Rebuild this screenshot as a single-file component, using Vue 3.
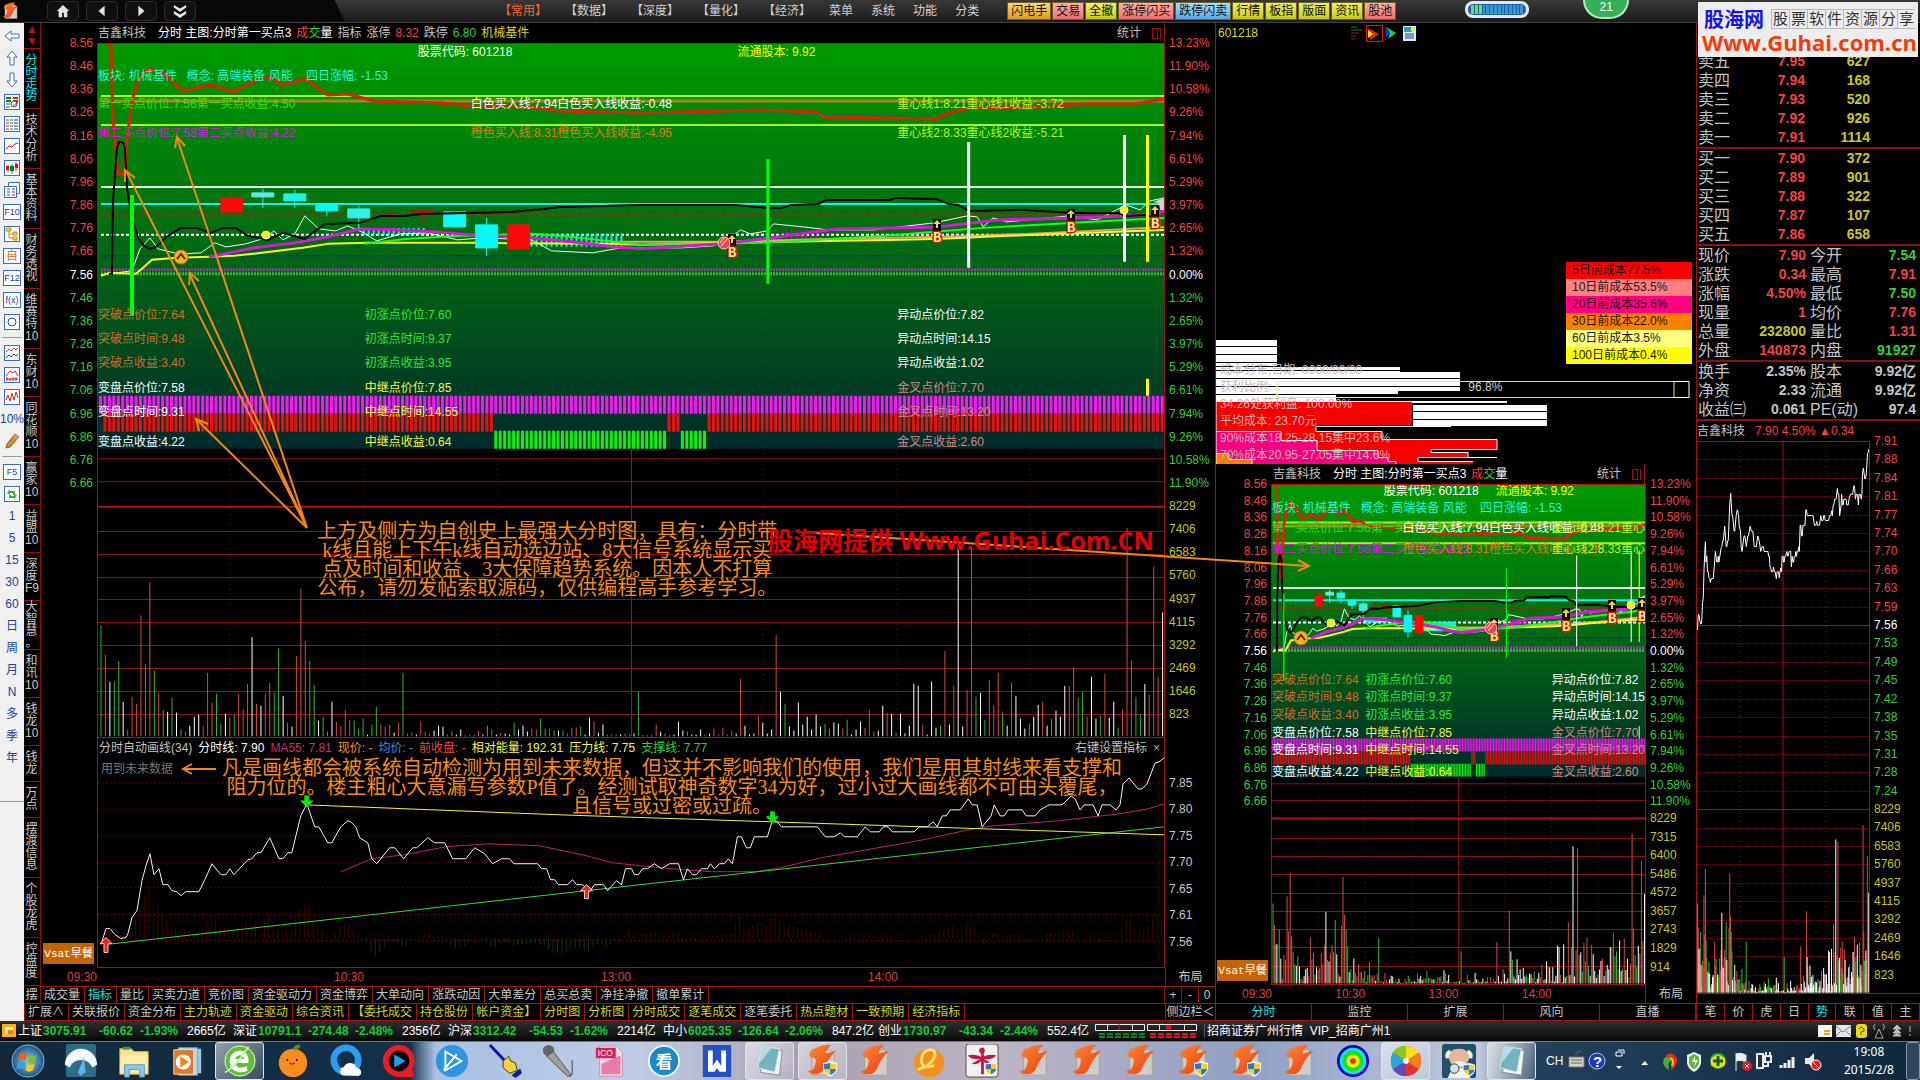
<template>
  <div class="desk">
    <!-- Símbolos compartidos -->
    <svg class="defs" aria-hidden="true">
      <defs>
        <linearGradient id="field" x1="0" y1="0" x2="0" y2="1">
          <stop offset="0" stop-color="#009a00" /><stop offset="0.5" stop-color="#006a12" /><stop offset="1" stop-color="#002a2c" />
        </linearGradient>
        <linearGradient id="flame" x1="0" y1="0" x2="1" y2="1"><stop offset="0" stop-color="#ff8a3a" /><stop offset="1" stop-color="#e8390a" /></linearGradient>
        <radialGradient id="orb"><stop offset="0" stop-color="#8fd0f0" /><stop offset="1" stop-color="#1c5486" /></radialGradient>

        <symbol id="session" viewBox="0 0 1067 693" preserveAspectRatio="none">
          <path d="M0 415H1067M0 438H1067" stroke="#8e1414" class="hair" />
          <path d="M0 463H1067" stroke="#b01414" stroke-width="2" class="hair" />
          <path d="M132 405V693M266 405V693M400 405V693M666 405V693M800 405V693M933 405V693" stroke="#7c1010" stroke-dasharray="1 4" class="hair" />
          <path d="M534 405V693" stroke="#a01414" class="hair" />
          <rect width="1067" height="405" fill="url(#field)" />
          <path d="M3 52H1067M3 81H1067" stroke="#a6f81c" stroke-width="2" class="hair" />
          <path d="M3 57H1067" stroke="#a68418" stroke-width="3" class="hair" />
          <path d="M3 143H1067" stroke="#f0fff0" stroke-width="2" class="hair" />
          <path d="M3 160H1067" stroke="#19f0e8" stroke-width="2" class="hair" />
          <path d="M3 171H1067" stroke="#8c3010" stroke-width="2" stroke-dasharray="4 2" class="hair" />
          <path d="M3 191H1067" stroke="#fff" stroke-width="2" stroke-dasharray="3 2" class="hair" />
          <path d="M3 212H1067" stroke="#10208c" stroke-dasharray="4 1" class="hair" />
          <path d="M3 226H1067" stroke="#8c409c" stroke-width="3" stroke-dasharray="2 1" class="hair" />
          <path d="M3 230H1067" stroke="#30b830" stroke-width="3" stroke-dasharray="2 1" class="hair" />
          <path :d="hatch(266, 328, 184, 191)" stroke="#20e8e8" stroke-width="2" class="hair" />
          <path :d="hatch(434, 528, 190, 203)" stroke="#20e8e8" stroke-width="2" class="hair" />
          <path :d="hatch(684, 734, 186, 199)" stroke="#c010c0" class="hair" />
          <path :d="bars(0, 240)" transform="translate(0 352)" fill="#f01cf0" />
          <path :d="bars(1, 89) + bars(128, 131) + bars(137, 240)" transform="translate(0 370)" fill="#e81010" />
          <path :d="bars(89, 128) + bars(131, 137)" transform="translate(0 387)" fill="#10f010" />
          <g fill="none" stroke-linejoin="round">
            <polyline :points="lines.white" stroke="#e8ffe8" class="hair" />
            <polyline :points="lines.salmon" stroke="#e8a070" stroke-width="2" class="hair" />
            <polyline :points="lines.yellow" stroke="#f8f820" stroke-width="2" class="hair" />
            <polyline :points="lines.green" stroke="#20f820" stroke-width="2" class="hair" />
            <polyline :points="lines.magenta" stroke="#d818d8" stroke-width="3" class="hair" />
            <polyline :points="lines.red" stroke="#d82408" stroke-width="3" class="hair" />
          </g>
          <g v-for="c in candles" :key="c[0]" :stroke="c[3]" :fill="c[3]">
            <path :d="`M${c[0] + 11} ${c[4]}V${c[5]}`" class="hair" />
            <rect :x="c[0]" :y="c[1]" width="22" :height="c[2]" class="hair" />
          </g>
          <path d="M293 165v10M288 170h10M314 169h22" stroke="#b01010" class="hair" />
          <polyline :points="lines.black" fill="none" stroke="#000" stroke-width="2" class="hair" />
          <path d="M32 151h4v121h-4zM669 115h3v125h-3z" fill="#00ff10" />
          <path d="M870 98h3v126h-3zM1026 91h3v127h-3z" fill="#fff" />
          <path d="M1049 91h3v127h-3zM1049 335h3v17h-3z" fill="#ff0" />
          <path d="M1056 158l11-4v12h-4v-6l-2 8v-9z" fill="#ccd4cc" />
        </symbol>

        <symbol id="volumes" viewBox="0 0 1067 230" preserveAspectRatio="none">
          <path v-for="v in volumePaths" :key="v.color" :d="v.d" :stroke="v.color" class="hair" />
        </symbol>

        <symbol id="arrow" viewBox="0 0 16 16"><path d="M1 8l6-5v3h8v4H7v3z" fill="#fff" stroke="#3b6cc4" /></symbol>
        <symbol id="doc" viewBox="0 0 16 16"><rect x=".5" y=".5" width="15" height="15" fill="#fff" stroke="#3b6cc4" /><path d="M2 4h3M2 7h3M2 10h3M2 13h3" stroke="#d02020" /><path d="M6 4h3M6 7h3M6 10h3M6 13h3" stroke="#108030" /><path d="M10 4h4M10 7h4M10 10h4M10 13h4" stroke="#2030a0" /></symbol>
        <symbol id="lens" viewBox="0 0 16 16"><rect x=".5" y=".5" width="15" height="15" fill="#fff" stroke="#3b6cc4" /><path d="M2 4h5M2 7h5" stroke="#108030" stroke-width="2" /><path d="M9 4h5M9 7h5" stroke="#d02020" stroke-width="2" /><path d="M2 10h4M2 13h4" stroke="#108030" /><circle cx="10" cy="10" r="3" fill="#e8eef8" stroke="#555" /><path d="M8 13l6-5" stroke="#555" /></symbol>
        <symbol id="trend" viewBox="0 0 16 16"><rect x=".5" y=".5" width="15" height="15" fill="#fff" stroke="#3b6cc4" /><path d="M2 11l3-3 3 1 3-3 3-1" fill="none" stroke="#d01818" /></symbol>
        <symbol id="candle" viewBox="0 0 16 16"><rect x=".5" y=".5" width="15" height="15" fill="#fff" stroke="#3b6cc4" /><path d="M4 5v7M12 2v9" stroke="#e01010" /><path d="M8 4v10" stroke="#008030" /><path d="M2 6h3v4H2zM11 4h3v4h-3z" fill="#e01010" /><path d="M6 6h4v5H6z" fill="#008030" /></symbol>
        <symbol id="sheets" viewBox="0 0 16 16"><path d="M4.500.500h11v11h-11z" fill="#fff" stroke="#3b6cc4" /><path d="M.5 4.500h12v11H.5z" fill="#fff" stroke="#3b6cc4" /><path d="M3 7h3m2 0h3M3 10h3m2 0h3M3 13h3m2 0h3" stroke="#444" /></symbol>
        <symbol id="tree" viewBox="0 0 16 16"><rect x=".5" y=".5" width="15" height="15" fill="#fff" stroke="#3b6cc4" /><path d="M5 5v7h4M5 8h4" fill="none" stroke="#c09020" /><path d="M2 2h5v3H2zM9 6h4v3H9zM9 11h4v3H9z" fill="#f8d050" stroke="#c09020" /></symbol>
        <symbol id="ring" viewBox="0 0 16 16"><rect x=".5" y=".5" width="15" height="15" fill="#fff" stroke="#3b6cc4" /><circle cx="8" cy="8" r="4" fill="none" stroke="#2050a0" /></symbol>
        <symbol id="waves" viewBox="0 0 16 16"><rect x=".5" y=".5" width="15" height="15" fill="#fff" stroke="#3b6cc4" /><path d="M2 7l3-3 2 2 3-3 2 2 2-2" fill="none" stroke="#d02040" /><path d="M2 13l3-3 2 2 3-3 2 2 2-2" fill="none" stroke="#2040c0" /></symbol>
        <symbol id="roof" viewBox="0 0 16 16"><rect x=".5" y=".5" width="15" height="15" fill="#fff" stroke="#3b6cc4" /><path d="M2 9l4-5 3 2 2-2 3 5M2 12h12M3 10v4M6 11v3M9 10v4M12 10v4" fill="none" stroke="#d02020" /></symbol>
        <symbol id="pulse" viewBox="0 0 16 16"><rect x=".5" y=".5" width="15" height="15" fill="#fff" stroke="#3b6cc4" /><path d="M2 11l2-5 2 6 2-8 2 7 2-8 2 6" fill="none" stroke="#d02020" /></symbol>
        <symbol id="pencil" viewBox="0 0 16 16"><path d="M2 15l1-4 8-10 4 3-9 10z" fill="#d88a38" stroke="#8a5a20" /><path d="M11 1l4 3-2 3-4-3z" fill="#b0a8a0" /></symbol>
        <symbol id="cycle" viewBox="0 0 16 16"><rect x=".5" y=".5" width="15" height="15" fill="#fff" stroke="#3b6cc4" /><path d="M3 7l3-4v2h5v4H9V7H6v2zM13 9l-3 5v-2H5V9h2v1h3V8z" fill="#40b040" /></symbol>

        <symbol id="shield" viewBox="0 0 16 16"><path d="M8 0l7 2v6q-1 5-7 8-6-3-7-8V2z" fill="#f4f4f4" /><path d="M8 2v6H2V3zM8 8h6q-1 4-6 6z" fill="#2a76c8" /><path d="M8 2l6 1v5H8zM2 8h6v6q-5-2-6-6z" fill="#f8d020" /></symbol>
        <symbol id="tdx" viewBox="0 0 32 36"><path d="M4 6h20l4 5v22H4z" fill="#d0ccc8" stroke="#a8a098" /><path d="M3 8Q12 0 25 1q-7 6-6 9 5-1 11-3-9 9-13 19Q14 33 6 32q-6-2-6-3 7-1 8-9 2-6-5-6-3-2 0-6z" fill="url(#flame)" /></symbol>
        <symbol id="tdxs" viewBox="0 0 32 36"><use href="#tdx" width="32" height="36" /><use href="#shield" x="15" y="18" width="17" height="17" /></symbol>
        <symbol id="start" viewBox="0 0 40 40"><circle cx="20" cy="20" r="19" fill="url(#orb)" stroke="#9cc8e0" /><path d="M10 12q5-3 9 0l-2 8q-4-3-9 0z" fill="#f06020" /><path d="M21 13q4 3 9 0l-2 8q-5 3-9 0z" fill="#80c030" /><path d="M8 22q5-3 9 0l-2 8q-4-3-9 0z" fill="#30a0e8" /><path d="M19 23q4 3 9 0l-2 8q-5 3-9 0z" fill="#f8c820" /></symbol>
        <symbol id="gauge" viewBox="0 0 36 36"><rect x="2" width="32" height="35" rx="3" fill="#2e6d84" /><path d="M1 22a17 17 0 0 1 34 0l-5 3a13 13 0 0 0-24 0z" fill="#f4f8fa" /><path d="M21 14l2 16-6 4-2-4z" fill="#5ab4e8" /></symbol>
        <symbol id="folder" viewBox="0 0 36 36"><path d="M3 5h12l3 3h15v24H3z" fill="#f8e490" stroke="#d0b050" /><path d="M6 3h8v3H6z" fill="#40a040" /><path d="M4 12h29l-1 19H3z" fill="#fbeca8" /><path d="M8 35V22h21v13h-5v-8H13v8z" fill="#8cc8ea" stroke="#5a98c0" /></symbol>
        <symbol id="player" viewBox="0 0 36 36"><path d="M14 5h19v26H14z" fill="#9cc8e0" /><path d="M9 4h20v29H9z" fill="#b8daea" stroke="#7aa8c0" /><path d="M4 6h21v26H4z" fill="#e07828" stroke="#f0d8c0" /><circle cx="14" cy="19" r="8" fill="#fff" /><path d="M11 13l9 6-9 6z" fill="#f08018" /></symbol>
        <symbol id="ebrowser" viewBox="0 0 36 36"><circle cx="18" cy="18" r="16" fill="#5cc030" stroke="#e8ffe0" /><path d="M27 20H13q1 5 6 5 4 0 6-2l1 5q-3 2-8 2-11-1-11-12Q8 8 18 7q10 1 9 13zM13 16h9q0-4-4-4-4 0-5 4z" fill="#fff" /><path d="M2 30Q12 26 27 3" fill="none" stroke="#c8f0a8" stroke-width="2" /></symbol>
        <symbol id="orange" viewBox="0 0 36 36"><circle cx="18" cy="20" r="15" fill="#f88c1c" /><path d="M18 6q1-6 8-5-1 6-8 5z" fill="#3a9828" /><circle cx="12" cy="17" r="1" /><circle cx="22" cy="17" r="1" /><path d="M14 20q3 3 6 0" fill="none" stroke="#502000" /></symbol>
        <symbol id="qbrowser" viewBox="0 0 36 36"><circle cx="18" cy="17" r="13" fill="none" stroke="#2c9cf0" stroke-width="7" /><path d="M14 33a5 5 0 0 1 2-9 7 7 0 0 1 13 1q5 1 5 5 0 4-4 4z" fill="#fff" /></symbol>
        <symbol id="qplayer" viewBox="0 0 36 36"><path d="M18 1a17 17 0 0 1 14 26l2 8H18A17 17 0 0 1 18 1z" fill="#ec1c24" /><circle cx="18" cy="18" r="11" /><path d="M13 11l12 7-12 7z" fill="#1ca0f0" /></symbol>
        <symbol id="bluep" viewBox="0 0 36 36"><circle cx="18" cy="18" r="17" fill="#2e96e0" /><path d="M11 8l17 10-17 10zM9 28l14-17" fill="none" stroke="#fff" stroke-width="2" /></symbol>
        <symbol id="hand" viewBox="0 0 36 36"><path d="M2 1l17 18" stroke="#1010a0" stroke-width="3" /><path d="M16 18l6-5 2 5 5 2 2 8-8 3-7-6z" fill="#f8d040" stroke="#503000" /><path d="M25 33l9-7 2 5-7 5z" fill="#102090" /></symbol>
        <symbol id="mic" viewBox="0 0 36 36"><circle cx="8" cy="7" r="6" fill="#606468" /><path d="M6 13l7-5 19 25-4 1z" fill="#a4a098" stroke="#505050" /><path d="M33 17v15l-3 3" fill="none" stroke="#404040" /></symbol>
        <symbol id="icofile" viewBox="0 0 36 36"><path d="M6 2h18l6 7v25H6z" fill="#f8dce8" stroke="#c890a8" /><path d="M8 21l20-9v20H8z" fill="#e87ca8" /><rect x="2" y="4" width="21" height="11" fill="#d82050" /><text x="4" y="13" font-size="9" fill="#fff">ICO</text></symbol>
        <symbol id="kan" viewBox="0 0 36 36"><circle cx="18" cy="18" r="16" fill="#1c88c8" stroke="#e8f8ff" stroke-width="2" /><text x="9" y="25" font-size="18" font-weight="bold" fill="#fff">看</text></symbol>
        <symbol id="wps" viewBox="0 0 36 36"><path d="M3 1h30v34H3z" fill="#2450c8" /><path d="M11 7v20h3l4-6 4 6h3V7" fill="none" stroke="#fff" stroke-width="5" /></symbol>
        <symbol id="note" viewBox="0 0 36 36"><path d="M12 4l19 3-3 26-20-3z" fill="#f0f4f4" stroke="#888" /><path d="M10 3l18 2-5 25-18-5z" fill="#74b4c0" stroke="#d8f0f0" /><path d="M10 3l10 1-13 16z" fill="#b4dce0" /></symbol>
        <symbol id="ecat" viewBox="0 0 36 36"><ellipse cx="18" cy="20" rx="16" ry="15" fill="#f49020" /><path d="M6 27q13-3 18-13 2-8-5-8-8 1-9 10-1 11 13 7" fill="none" stroke="#ffe070" stroke-width="3" /></symbol>
        <symbol id="dragonfly" viewBox="0 0 36 36"><rect x="1" width="34" height="35" rx="3" fill="#f4f0f0" stroke="#444" /><path d="M17 4h3v28h-3z" fill="#c01848" /><circle cx="18" cy="7" r="3" fill="#c01848" /><path d="M3 12q9-2 15 2 6-4 15-2-3 5-13 4l9 5q-6 2-11-4-5 6-11 4l9-5Q6 17 3 12z" fill="#c01848" /><use href="#shield" x="20" y="19" width="15" height="15" /></symbol>
        <symbol id="target" viewBox="0 0 36 36"><circle cx="18" cy="18" r="17" fill="#0808c8" /><circle cx="18" cy="18" r="14" fill="#10e8f0" /><circle cx="18" cy="18" r="11" fill="#18e018" /><circle cx="18" cy="18" r="7" fill="#f8f010" /><circle cx="18" cy="18" r="3" fill="#f02010" /></symbol>
        <symbol id="pinwheel" viewBox="0 0 36 36"><circle cx="18" cy="18" r="16" fill="#e83030" /><path d="M18 18L4 9q6-8 14-7z" fill="#88c820" /><path d="M18 18V2q9 0 14 7z" fill="#f8e020" /><path d="M18 18l14-9q4 9 0 18z" fill="#f08020" /><path d="M18 18L4 27q-4-9 0-18z" fill="#28a8d8" /><path d="M18 18v16q-9 0-14-7z" fill="#6048c0" /><circle cx="18" cy="18" r="3" fill="#fff" /></symbol>
        <symbol id="prof" viewBox="0 0 36 36"><rect width="36" height="36" rx="3" fill="#22506c" /><path d="M7 15q0-10 11-10t11 10l-4 9H11z" fill="#e0b898" /><path d="M6 15q-2-5 3-7M30 15q2-5-3-7" stroke="#eee" stroke-width="4" fill="none" /><path d="M11 20q7-4 14 0l-3 4h-8zM6 36l5-11h14l5 11z" fill="#f0f0f0" /><circle cx="13" cy="26" r="5" fill="#cfe4ee" stroke="#333" /><use href="#shield" x="21" y="20" width="15" height="15" /></symbol>
      </defs>
    </svg>

    <header class="topbar">
      <div class="topnav">
        <svg class="applogo" viewBox="0 0 32 36"><use href="#tdx" /></svg>
        <button v-for="n in navIcons" :key="n.label" :aria-label="n.label">
          <svg viewBox="0 0 16 16"><path :d="n.d" fill="#e4e4e4" /></svg>
        </button>
      </div>
      <nav class="menu">
        <a v-for="m in menu" :key="m" href="#" :class="{ hot: m === '【常用】' }">{{ m }}</a>
      </nav>
      <div class="quick">
        <button v-for="q in quick" :key="q[0]" :class="q[1]">{{ q[0] }}</button>
      </div>
      <div class="meter"><i v-for="n in 14" :key="n" :class="{ on: n < 4 }"></i></div>
      <div class="bubble">21</div>
    </header>

    <main class="workspace">
      <aside class="tools">
        <template v-for="(t, i) in tools" :key="i">
          <hr v-if="t === '-'" />
          <button v-else-if="t[0] === '#'" :class="{ up: i === 1, down: i === 2 }" :aria-label="t.slice(1)"><svg viewBox="0 0 16 16"><use :href="t" /></svg></button>
          <button v-else :class="{ boxed: boxed.includes(t), self: t === '自' }">{{ t }}</button>
        </template>
        <div class="rest"></div>
      </aside>

      <nav class="sidetabs">
        <div class="scroller"><button aria-label="上">▲</button><button aria-label="下">▼</button></div>
        <a v-for="(s, i) in sideTabs" :key="i" href="#" :class="{ active: i === 0, tight: s === '大智慧。' }">{{ s }}</a>
      </nav>

      <section class="main">
        <div class="chart-head">
          <span class="dim">吉鑫科技</span><span class="gap">分时 主图:分时第一买点3</span>
          <span><b class="r">成</b><b class="g">交</b>量</span>
          <span class="dim">指标</span><span class="dim">涨停</span><span class="r">8.32</span>
          <span class="dim">跌停</span><span class="g">6.80</span><span class="y">机械基件</span>
          <span class="dim stat">统计</span><i class="split"></i>
        </div>
        <div class="upper">
          <div class="axis left">
            <div class="prices"><span v-for="(p, i) in prices" :key="p" :class="tone(i)"><em>{{ p }}</em></span></div>
            <div class="vols"></div>
          </div>
          <div class="plot">
            <svg class="fill"><use href="#session" width="100%" height="100%" /></svg>
            <div class="volume-pane">
              <i v-for="n in 10" :key="n" class="row"></i>
              <svg class="fill"><use href="#volumes" width="100%" height="100%" /></svg>
            </div>
            <span v-for="l in labels" :key="l[0]" class="label" :style="pos(l)">{{ l[0] }}</span>
            <svg v-for="(m, i) in markers" :key="i" class="marker" viewBox="0 0 20 30" :style="{ left: m[1] / 10.67 + '%', top: m[2] / 6.93 + '%' }">
              <template v-if="m[0] === 'B'"><rect x="6" y="3" width="8" height="12" fill="#000" /><path d="M10 4l4 4h-3v4H9V8H6z" fill="#f8d818" /><text x="6" y="26" class="buy">B</text></template>
              <template v-else-if="m[0] === 'gold'"><circle cx="10" cy="15" r="7" fill="#f8b020" stroke="#b87008" /><path d="M6 17l4-5 4 5" fill="none" stroke="#602000" stroke-width="2" /></template>
              <template v-else-if="m[0] === 'ball'"><circle cx="10" cy="15" r="6" fill="#e84848" stroke="#ffc8c8" /><path d="M7 18l6-7M6 15l4-5" stroke="#ffe0e0" /></template>
              <circle v-else cx="10" cy="15" r="4" fill="#f8f010" stroke="#fff890" />
            </svg>
          </div>
          <div class="axis right">
            <div class="prices"><span v-for="(p, i) in percents" :key="i" :class="tone(i)"><em>{{ p }}</em></span></div>
            <div class="vols"><span v-for="v in volBig" :key="v"><em>{{ v }}</em></span></div>
          </div>
        </div>
        <div class="indicator-head">
          <span class="dim">分时自动画线(34)</span><span>分时线: 7.90</span><span class="pink">MA55: 7.81</span>
          <span class="o">现价: -</span><span class="b">均价: -</span><span class="r">前收盘: -</span>
          <span class="y">相对能量: 192.31</span><span class="y">压力线: 7.75</span><span class="g">支撑线: 7.77</span>
          <span class="dim stat">右键设置指标</span><button aria-label="关闭">×</button>
        </div>
        <div class="lower">
          <div class="axis left"><button class="vsat">Vsat早餐</button></div>
          <div class="plot">
            <svg class="fill" viewBox="0 0 1067 210" preserveAspectRatio="none" fill="none">
              <path d="M0 25H1067M0 52H1067M0 78H1067M0 105H1067M0 130H1067M0 157H1067M0 183H1067" stroke="#7c1818" stroke-dasharray="1 3" class="hair" />
              <path :d="osc.up" stroke="#3c0404" class="hair" />
              <path :d="osc.down" stroke="#04380c" class="hair" />
              <polyline :points="lines.ma" stroke="#b82468" class="hair" />
              <path d="M8 187L489 133L1067 69" stroke="#38d838" class="hair" />
              <path d="M209 47L463 57L675 64L1067 77" stroke="#f0f040" class="hair" />
              <polyline :points="lines.price" stroke="#f4f4f4" class="hair" />
              <path d="M8 180l6 6h-4v9H6v-9H2zM489 127l6 6h-4v8h-4v-8h-4z" fill="#f02020" stroke="#ffc8c8" class="hair" />
              <path d="M209 49l-6-6h4v-5h4v5h4zM675 65l-6-6h4v-5h4v5h4z" fill="#10e010" stroke="#10e010" class="hair" />
            </svg>
            <span class="future">用到未来数据</span>
          </div>
          <div class="axis right scale"><span v-for="p in lowScale" :key="p"><em>{{ p }}</em></span></div>
        </div>
        <div class="times">
          <div class="ticks"><span v-for="t in times" :key="t">{{ t }}</span></div><button>布局</button>
        </div>
        <nav class="tabs">
          <a v-for="t in indicatorTabs" :key="t" href="#" :class="{ active: t === '指标' }">{{ t }}</a>
          <div class="zoomers"><button>+</button><button>-</button><button>0</button></div>
        </nav>
      </section>

      <nav class="tabs ext">
        <a v-for="t in extTabs" :key="t" href="#" :class="{ y: yellowTabs.includes(t) }">{{ t }}</a>
        <button class="fold">侧边栏＜</button>
      </nav>

      <section class="middle">
        <div class="cost">
          <div class="cost-head">
            <span class="y">601218</span>
            <svg viewBox="0 0 66 17">
              <path d="M0 2h6M0 5h11" stroke="#108030" /><path d="M0 8h8M0 11h5M0 14h4" stroke="#b01818" />
              <path d="M15.500.500h16v16h-16z" stroke="#e01818" fill="none" /><path d="M17 3l11 6-9 6z" fill="#e82020" /><path d="M17 5l5 4-5 4z" fill="#f8e020" />
              <path d="M35 2l10 6-8 6 2-6z" fill="#10d840" /><path d="M34 2l5 6-4 5z" fill="#2030e0" />
              <path d="M52 1h13v15H52z" fill="#d8e8f8" /><path d="M53 2h8v5h-8z" fill="#30a0b0" /><path d="M60 2h4v4h-4z" fill="#f0e040" /><path d="M54 9h9M54 11h9M54 13h9" stroke="#204890" />
            </svg>
          </div>
          <ul class="legend">
            <li v-for="l in legend" :key="l[0]" :style="{ background: l[1] }">{{ l[0] }}</li>
          </ul>
          <div class="spread">
            <svg class="fill" viewBox="0 0 480 124" preserveAspectRatio="none">
              <path d="M0 0h61v26H0zM0 27h184v5H0zM0 32h244v19H0zM0 51h182v3H0zM0 54h120v8H0zM95 61h196v2H95zM197 65h134v21H197z" fill="#fcfcfc" />
              <path d="M0 6.500h61M0 14.500h61M0 22.500h61M0 30.500h184M0 38.500h244M0 46.500h244M0 54.500h120M197 71.500h134M197 79.500h134" stroke="#000" class="hair" />
              <path d="M0 62h196v23h-96v6h66v8h115v10h-66v3h37v5h-50v4h55v3H0z" fill="#f80000" />
              <path d="M0 91h65v9h36v10h61v7h10v4h8v3H0z" fill="#f80080" />
              <path d="M0 113h13v6h23v5H0z" fill="#f88000" />
              <path d="M235 86.500H100v5h66v8h115v10h-66v3h37v5h-50v4h55M0 91.500h65v9h36v10h61v7h10v4h8v3M0 113.500h13v6h23v5M0 62v62M202 117.500h79" fill="none" stroke="#fff" class="hair" />
              <path d="M61 41.500h412v16H61z" fill="none" stroke="#fff" class="hair" /><path d="M61 41.500h397v16H61z" fill="none" stroke="#f0f030" class="hair" />
            </svg>
            <p>成本分布,日期: 0000/00/00</p>
            <p class="ratio">获利比例:<span>96.8%</span></p>
            <p>34.26处获利盘: 100.00%</p>
            <p>平均成本: 23.70元</p>
            <p>90%成本18.25-28.15集中23.6%</p>
            <p>70%成本20.95-27.05集中14.6%</p>
          </div>
        </div>
        <div class="side-chart">
          <div class="chart-head">
            <span class="dim">吉鑫科技</span><span class="gap">分时 主图:分时第一买点3</span>
            <span><b class="r">成</b><b class="g">交</b>量</span><span class="dim stat">统计</span><i class="split"></i>
          </div>
          <div class="upper">
            <div class="axis left">
              <div class="prices"><span v-for="(p, i) in prices" :key="p" :class="tone(i)"><em>{{ p }}</em></span></div>
              <div class="vols"></div>
              <button class="vsat">Vsat早餐</button>
            </div>
            <div class="plot">
              <svg class="fill"><use href="#session" width="100%" height="100%" /></svg>
              <div class="volume-pane">
                <i v-for="n in 9" :key="n" class="row"></i>
                <svg class="fill"><use href="#volumes" width="100%" height="100%" /></svg>
              </div>
              <span v-for="l in labels" :key="l[0]" class="label" :style="pos(l)">{{ l[0] }}</span>
              <svg v-for="(m, i) in markers" :key="i" class="marker" viewBox="0 0 20 30" :style="{ left: m[1] / 10.67 + '%', top: m[2] / 6.93 + '%' }">
                <template v-if="m[0] === 'B'"><rect x="6" y="3" width="8" height="12" fill="#000" /><path d="M10 4l4 4h-3v4H9V8H6z" fill="#f8d818" /><text x="6" y="26" class="buy">B</text></template>
                <template v-else-if="m[0] === 'gold'"><circle cx="10" cy="15" r="7" fill="#f8b020" stroke="#b87008" /><path d="M6 17l4-5 4 5" fill="none" stroke="#602000" stroke-width="2" /></template>
                <template v-else-if="m[0] === 'ball'"><circle cx="10" cy="15" r="6" fill="#e84848" stroke="#ffc8c8" /><path d="M7 18l6-7M6 15l4-5" stroke="#ffe0e0" /></template>
                <circle v-else cx="10" cy="15" r="4" fill="#f8f010" stroke="#fff890" />
              </svg>
            </div>
            <div class="axis right">
              <div class="prices"><span v-for="(p, i) in percents" :key="i" :class="tone(i)"><em>{{ p }}</em></span></div>
              <div class="vols"><span v-for="v in volSide" :key="v"><em>{{ v }}</em></span></div>
            </div>
          </div>
          <div class="times">
            <div class="ticks"><span v-for="t in times" :key="t">{{ t }}</span></div><button>布局</button>
          </div>
        </div>
      </section>

      <nav class="even mid-tabs">
        <a v-for="t in midTabs" :key="t" href="#" :class="{ active: t === '分时' }">{{ t }}</a>
      </nav>

      <section class="quotes">
        <div class="quote-top"></div>
        <table class="book">
          <tbody v-for="side in book" :key="side[0][0]">
            <tr v-for="r in side" :key="r[0]"><th>{{ r[0] }}</th><td class="r">{{ r[1] }}</td><td class="qty">{{ r[2] }}</td></tr>
          </tbody>
        </table>
        <table class="facts">
          <tbody v-for="(group, gi) in facts" :key="gi">
            <tr v-for="r in group" :key="r[0]">
              <th>{{ r[0] }}</th><td :class="r[2]">{{ r[1] }}</td><th>{{ r[3] }}</th><td :class="r[5]">{{ r[4] }}</td>
            </tr>
          </tbody>
        </table>
        <div class="mini-head"><span class="dim">吉鑫科技</span><span class="r">7.90 4.50% ▲0.34</span></div>
        <div class="mini">
          <div class="mini-plot">
            <i v-for="n in 30" :key="n" class="row" :class="{ solid: n === 11 || n === 21 || n === 1 }"></i>
            <svg class="fill" viewBox="0 0 4 1" preserveAspectRatio="none">
              <path d="M1 0V1M3 0V1" stroke="#8c1414" stroke-dasharray="1 4" class="hair" /><path d="M2 0V1" stroke="#a01414" class="hair" />
            </svg>
            <svg class="line" viewBox="0 -8 1067 380" preserveAspectRatio="none"><polyline :points="lines.price" fill="none" stroke="#fff" class="hair" /></svg>
            <svg class="bars"><use href="#volumes" width="100%" height="100%" /></svg>
          </div>
          <div class="axis right">
            <div class="prices"><span v-for="(p, i) in miniScale" :key="p" :class="tone(i)"><em>{{ p }}</em></span></div>
            <div class="vols"><span v-for="v in volBig" :key="v"><em>{{ v }}</em></span></div>
          </div>
        </div>
      </section>

      <nav class="even">
        <a v-for="t in quoteTabs" :key="t" href="#" :class="{ active: t === '势' }">{{ t }}</a>
      </nav>

      <!-- Anotaciones sobre los gráficos -->
      <svg class="notes-lines" viewBox="0 23 1920 998" preserveAspectRatio="none">
        <g fill="none" stroke="#f08818" stroke-width="2">
          <path d="M307 528L177 138M307 528L126 171M307 528L190 275M307 528L197 420M815 533L1308 566M216 769H183" class="hair" />
          <path d="M175 148L177 137L185 146M125 182L125 170L135 178M189 285L190 273L199 281M199 431L196 419L208 424M1298 560L1309 566L1298 571M192 764L183 769L192 774" class="hair" />
        </g>
      </svg>
      <p class="note first">上方及侧方为自创史上最强大分时图，具有：分时带<br />k线且能上下午k线自动选边站、8大信号系统显示买<br />点及时间和收益、3大保障趋势系统。因本人不打算<br />公布，请勿发帖索取源码，仅供编程高手参考学习。</p>
      <p class="note second">凡是画线都会被系统自动检测为用到未来数据，但这并不影响我们的使用，我们是用其射线来看支撑和<br />阻力位的。楼主粗心大意漏写参数P值了。经测试取神奇数字34为好，过小过大画线都不可由头覆尾，<br />且信号或过密或过疏。</p>
      <p class="credit">股海网提供 Www.Guhai.Com.CN</p>
    </main>

    <div class="brand">
      <div><b>股海网</b><span v-for="c in '股票软件资源分享'" :key="c">{{ c }}</span></div>
      <a href="#">Www.Guhai.com.cn</a>
    </div>

    <footer class="status">
      <svg class="box" viewBox="0 0 14 14"><path d="M0 0h14v13H0z" fill="#f8b020" /><path d="M3 3h8v7H3z" fill="#fff0c0" /><path d="M6 6h5v4H6z" fill="#e88010" /></svg>
      <div v-for="x in indices" :key="x[0]" class="index">
        <span>{{ x[0] }}</span><b>{{ x[1] }}</b><b class="chg">{{ x[2] }}</b><b class="pct">{{ x[3] }}</b><span>{{ x[4] }}</span>
      </div>
      <svg class="gauges" viewBox="0 0 102 16">
        <path d="M.5 1.500h49v6H.5zM52.500 1.500h49v6h-49zM12.500 1v6M37.500 1v6M64.500 1v6M89.500 1v6" fill="none" stroke="#eee" /><path d="M24 1v6" stroke="#d02020" /><path d="M71 2h5v5h-5z" fill="#e01010" />
        <path d="M4 11h46M4 14h46" stroke="#108020" stroke-width="2" stroke-dasharray="6 2" /><path d="M55 11h46M55 14h46" stroke="#e01818" stroke-width="2" stroke-dasharray="6 2" />
      </svg>
      <span class="server">招商证券广州行情&nbsp; VIP_招商广州1</span>
      <svg class="flags" viewBox="0 0 98 16">
        <path d="M0 2h14v12H0z" fill="#f4f4f4" /><path d="M6 8h6M6 11h6" stroke="#d8b010" stroke-width="2" />
        <path d="M18 2h15v12H18z" fill="#e4e8ec" /><path d="M18 3l7 6 8-6M18 13l5-5M33 13l-5-5" stroke="#708090" fill="none" />
        <rect x="38" y="1" width="11" height="14" rx="3" fill="#e8d820" /><path d="M41 6l2-2 3 2v2l-3 1v3" stroke="#605000" fill="none" />
        <path d="M61 6l-4 9h8zM57 1q-3 3 0 6M65 1q3 3 0 6" fill="none" stroke="#aaa" /><path d="M79 2l4 4h-8zM79 6l4 4h-8zM79 10l4 3h-8zM92 3v6M92 11v2" stroke="#bbb" fill="#bbb" />
      </svg>
    </footer>

    <footer class="taskbar">
      <button v-for="(a, i) in apps" :key="i" :class="{ open: openApps.includes(i), startb: i === 0 }" :aria-label="a">
        <svg viewBox="0 0 36 36"><use :href="'#' + a" width="36" height="36" /></svg>
      </button>
      <div class="tray">
        <span>CH</span>
        <svg viewBox="0 0 200 36">
          <path d="M2 14h15v10H2z" fill="#d4d4cc" stroke="#777" /><path d="M4 17h11M4 20h11M9 13q-1-4 5-5" stroke="#666" fill="none" />
          <circle cx="30" cy="18" r="8" fill="#2038b0" stroke="#b0c0f0" /><text x="26" y="24" font-size="15" font-weight="bold" fill="#fff">?</text>
          <path d="M49 9h6v4h-6zM51 7h6v4" fill="none" stroke="#fff" /><path d="M49 23h6l-3 3zM74 22h7l-3-4z" fill="#fff" />
          <path d="M98 13q6-6 12 2 1 8-6 12 2-10-6-14z" fill="#e03020" /><path d="M97 15q-3 8 5 12-2-8 3-10-4-5-8-2z" fill="#48b030" /><path d="M103 15q5 2 2 8" stroke="#f8c020" stroke-width="2" fill="none" />
          <path d="M127 9l7 3v8q-1 6-7 9-6-3-7-9v-8z" fill="#f0f4f0" /><path d="M127 11l5 3v6q-1 4-5 6-4-2-5-6v-6z" fill="#58b840" /><path d="M128 13l-3 6h3l-1 5 4-7h-3z" fill="#fff" />
          <circle cx="151" cy="18" r="8" fill="#30b030" /><path d="M144 16q7-8 14 0v6q-7 6-14 0z" fill="#f8d818" /><path d="M151 13v10M146 18h10" stroke="#106020" stroke-width="3" />
          <path d="M169 10v18M169 11q5-2 10 1v7q-5-3-10-1" stroke="#eee" fill="#eee" /><circle cx="180" cy="23" r="5" fill="#e02020" /><path d="M178 21l4 4M182 21l-4 4" stroke="#fff" />
        </svg>
        <svg class="net" viewBox="0 0 70 36">
          <path d="M4 11h6v14H4zM12 13v6h6v-6zM13 9v4M17 9v4M15 19v4h-5" fill="none" stroke="#eee" stroke-width="2" />
          <path d="M28 25v-3M32 25v-5M36 25v-8M40 25V14" stroke="#f4f4f4" stroke-width="3" />
          <path d="M52 15h4l5-5v16l-5-5h-4z" fill="#e8e8e8" /><circle cx="63" cy="22" r="5" fill="#e02020" stroke="#fff" /><path d="M60 19l6 6" stroke="#fff" />
        </svg>
      </div>
      <div class="clock">19:08<br />2015/2/8</div>
      <button class="peek" aria-label="显示桌面"></button>
    </footer>
  </div>
</template>

<script setup>
const navIcons = [
  { label: '主页', d: 'M8 1l7 7h-2v7h-4v-5H7v5H3V8H1z' },
  { label: '后退', d: 'M11 2v12L4 8z' },
  { label: '前进', d: 'M5 2v12l7-6z' },
  { label: '更多', d: 'M1 1l7 4 7-4v3l-7 5-7-5zM1 8l7 4 7-4v3l-7 5-7-5z' },
];
const menu = ['【常用】', '【数据】', '【深度】', '【量化】', '【经济】', '菜单', '系统', '功能', '分类'];
const quick = [['闪电手', 'gold'], ['交易', 'rose'], ['全撤', 'lime'], ['涨停闪买', 'rose'], ['跌停闪卖', 'sky'], ['行情', 'lime'], ['板指', 'lime'], ['版面', 'lime'], ['资讯', 'lime'], ['股池', 'rose']];

const tools = ['#arrow', '#arrow', '#arrow', '#lens', '#doc', '#trend', '#candle', '#sheets', 'F10', '#tree', '自', 'F12', 'f(x)', '#ring', '-', '#waves', '#roof', '#pulse', '10%', '#pencil', '-', 'F5', '#cycle', '1', '5', '15', '30', '60', '日', '周', '月', 'N', '多', '季', '年'];
const boxed = ['F10', '自', 'F12', 'f(x)', 'F5'];
const sideTabs = ['分时走势', '技术分析', '基本资料', '财务透视', '维赛特10', '东财10', '同花顺10', '赢家10', '益盟10', '深度F9', '大智慧。', '和讯10', '钱龙10', '钱龙', '万点', '摆渡信息', '个股龙虎', '控盘度', '摆'];

const prices = Array.from({ length: 20 }, (_, i) => (8.56 - i * 0.1).toFixed(2));
const percents = ['13.23%', '11.90%', '10.58%', '9.26%', '7.94%', '6.61%', '5.29%', '3.97%', '2.65%', '1.32%', '0.00%', '1.32%', '2.65%', '3.97%', '5.29%', '6.61%', '7.94%', '9.26%', '10.58%', '11.90%'];
const volBig = [8229, 7406, 6583, 5760, 4937, 4115, 3292, 2469, 1646, 823];
const volSide = [8229, 7315, 6400, 5486, 4572, 3657, 2743, 1829, 914];
const lowScale = ['7.85', '7.80', '7.75', '7.70', '7.65', '7.61', '7.56'];
const miniScale = ['7.91', '7.88', '7.84', '7.81', '7.77', '7.74', '7.70', '7.66', '7.63', '7.59', '7.56', '7.53', '7.49', '7.45', '7.42', '7.38', '7.35', '7.31', '7.28', '7.24'];
const times = ['09:30', '10:30', '13:00', '14:00'];
const tone = (i) => (i === 10 ? 'w' : i < 10 ? 'r' : 'g');

const indicatorTabs = ['成交量', '指标', '量比', '买卖力道', '竞价图', '资金驱动力', '资金博弈', '大单动向', '涨跌动因', '大单差分', '总买总卖', '净挂净撤', '撤单累计'];
const extTabs = ['扩展∧', '关联报价', '资金分布', '主力轨迹', '资金驱动', '综合资讯', '【委托成交', '持仓股份', '帐户资金】', '分时图', '分析图', '分时成交', '逐笔成交', '逐笔委托', '热点题材', '一致预期', '经济指标'];
const yellowTabs = extTabs.filter((t, i) => i > 2 && t !== '逐笔委托');
const midTabs = ['分时', '监控', '扩展', '风向', '直播'];
const quoteTabs = ['笔', '价', '虎', '日', '势', '联', '值', '主'];

const legend = [['5日前成本77.5%', '#ff0000'], ['10日前成本53.5%', '#ff8080'], ['20日前成本35.6%', '#ff0080'], ['30日前成本22.0%', '#ff8000'], ['60日前成本3.5%', '#ffff80'], ['100日前成本0.4%', '#ffff00']];

const book = [
  [['卖五', '7.95', 627], ['卖四', '7.94', 168], ['卖三', '7.93', 520], ['卖二', '7.92', 926], ['卖一', '7.91', 1114]],
  [['买一', '7.90', 372], ['买二', '7.89', 901], ['买三', '7.88', 322], ['买四', '7.87', 107], ['买五', '7.86', 658]],
];
const facts = [
  [
    ['现价', '7.90', 'r', '今开', '7.54', 'g'],
    ['涨跌', '0.34', 'r', '最高', '7.91', 'r'],
    ['涨幅', '4.50%', 'r', '最低', '7.50', 'g'],
    ['现量', '1', 'r', '均价', '7.76', 'r'],
    ['总量', '232800', 'qty', '量比', '1.31', 'r'],
    ['外盘', '140873', 'r', '内盘', '91927', 'g'],
  ],
  [
    ['换手', '2.35%', 'dim', '股本', '9.92亿', 'dim'],
    ['净资', '2.33', 'dim', '流通', '9.92亿', 'dim'],
    ['收益㈢', '0.061', 'dim', 'PE(动)', '97.4', 'dim'],
  ],
];

// texto, x, y (sobre 1067 x 693), color
const labels = [
  ['股票代码: 601218', 320, 8, '#fff'], ['流通股本: 9.92', 640, 8, '#ff0'],
  ['板块: 机械基件\u00a0\u00a0 概念: 高端装备 风能\u00a0\u00a0\u00a0 四日涨幅: -1.53', 0, 32, '#2cf4d8'],
  ['第一买点价位:7.56第一买点收益:4.50', 0, 60, '#38e010'], ['白色买入线:7.94白色买入线收益:-0.48', 373, 60, '#fff'], ['重心线1:8.21重心线1收益:-3.72', 800, 60, '#b4f820'],
  ['第二买点价位:7.58第二买点收益:4.22', 0, 89, '#d818d8'], ['橙色买入线:8.31橙色买入线收益:-4.95', 373, 89, '#e07818'], ['重心线2:8.33重心线2收益:-5.21', 800, 89, '#b4f820'],
  ['突破点价位:7.64', 0, 271, '#d86c20'], ['突破点时间:9.48', 0, 295, '#d86c20'], ['突破点收益:3.40', 0, 319, '#d86c20'],
  ['变盘点价位:7.58', 0, 344, '#fff'], ['变盘点时间:9.31', 0, 368, '#fff'], ['变盘点收益:4.22', 0, 398, '#fff'],
  ['初涨点价位:7.60', 267, 271, '#30e838'], ['初涨点时间:9.37', 267, 295, '#30e838'], ['初涨点收益:3.95', 267, 319, '#30e838'],
  ['中继点价位:7.85', 267, 344, '#f8f840'], ['中继点时间:14.55', 267, 368, '#f8f840'], ['中继点收益:0.64', 267, 398, '#f8f840'],
  ['异动点价位:7.82', 800, 271, '#fff'], ['异动点时间:14.15', 800, 295, '#fff'], ['异动点收益:1.02', 800, 319, '#fff'],
  ['金叉点价位:7.70', 800, 344, '#d88888'], ['金叉点时间:13.20', 800, 368, '#d88888'], ['金叉点收益:2.60', 800, 398, '#d88888'],
];
const pos = (l) => ({ left: l[1] / 10.67 + '%', top: l[2] / 6.93 + '%', color: l[3] });
const markers = [['gold', 83, 213], ['dot', 168, 191], ['B', 635, 202], ['ball', 627, 199], ['B', 840, 187], ['B', 974, 177], ['B', 1058, 173], ['dot', 1027, 166]];

// x, y, alto, color, mecha desde, hasta
const candles = [
  [123, 154, 14, '#ff0808', 147, 168], [154, 149, 4, '#60e8e0', 145, 164], [186, 150, 7, '#20f0e8', 146, 164],
  [218, 160, 7, '#08f8f8', 160, 172], [250, 165, 9, '#30f0e8', 162, 185], [314, 167, 4, '#c01010', 166, 180],
  [346, 168, 15, '#10f8f8', 168, 184], [378, 181, 23, '#08f8f8', 174, 212], [410, 181, 24, '#ff0808', 180, 206],
];

const lines = {
  red: '8,0 13,1 15,74 20,130 27,130 28,104 34,57 40,37 46,28 53,25 66,30 85,47 113,41 136,48 152,39 172,33 185,41 207,35 230,51 250,50 276,57 344,59 372,62 434,63 462,67 543,69 661,66 719,68 727,73 792,74 839,75 849,70 870,64 943,63 992,60 1037,60 1067,55',
  black: '11,230 14,230 15,157 19,104 21,98 25,98 27,105 29,144 34,174 40,194 46,202 52,205 58,203 70,192 83,184 99,184 113,189 125,184 138,184 150,192 170,196 185,189 207,195 227,180 262,179 283,172 307,172 323,170 413,168 446,165 462,163 543,161 637,161 670,164 684,164 694,161 721,160 729,156 792,156 800,154 839,155 851,160 861,161 872,167 927,166 976,169 1021,169 1029,172 1049,171 1057,174',
  yellow: '3,232 11,229 38,230 44,225 54,216 79,214 111,213 136,212 164,209 205,204 230,200 270,199 372,199 515,200 543,201 625,199 686,198 804,196 845,195 910,192 992,189 1067,186',
  magenta: '111,213 156,204 197,199 230,193 262,185 299,186 336,188 376,191 434,194 474,198 515,203 543,205 625,200 674,194 739,185 796,184 841,183 902,176 976,174 1025,172 1061,170 1067,166',
  green: '266,200 311,195 364,192 434,190 474,193 543,201 625,200 686,198 788,192 886,184 992,178 1067,174',
  salmon: '515,198 543,198 625,198 739,195 849,193 935,190 1012,186 1067,183',
  white: '3,231 34,227 42,205 52,194 60,205 72,208 83,210 103,209 117,199 128,203 148,200 168,194 176,187 185,196 197,190 207,172 221,185 238,187 250,182 266,189 279,197 303,190 330,189 360,196 385,194 434,196 454,207 495,209 523,204 543,204 584,204 616,202 638,190 643,186 653,190 670,187 676,180 706,183 731,186 776,186 837,179 870,172 880,173 886,183 896,174 910,178 972,172 1000,176 1029,161 1043,166 1053,157 1067,154',
  price: '3,187 8,171 12,171 17,177 23,181 28,180 30,176 34,160 39,153 44,123 48,108 52,96 56,117 61,111 65,127 70,127 74,133 79,134 83,138 88,134 101,134 107,122 114,106 123,117 128,117 132,111 136,117 150,102 154,101 159,95 163,95 172,80 181,101 185,101 190,95 194,95 203,58 209,46 217,69 221,69 230,85 234,85 243,69 250,63 253,64 258,69 262,80 270,85 274,101 279,106 292,90 297,90 306,101 315,90 319,90 330,80 337,85 347,85 355,101 368,101 377,90 387,96 395,106 404,101 412,101 416,106 440,106 444,111 449,111 453,122 457,122 461,127 470,127 475,122 479,127 485,127 492,134 497,127 506,127 510,133 519,123 524,127 528,111 534,111 537,117 541,117 545,111 550,111 557,106 564,111 572,106 581,106 586,122 590,111 595,117 599,117 604,111 610,111 613,106 617,111 622,106 627,106 631,101 635,106 640,79 644,79 649,90 653,90 657,79 670,79 675,63 679,63 684,69 720,69 728,79 737,79 743,75 747,79 760,79 768,69 773,74 782,74 786,69 791,69 795,74 817,74 822,69 830,69 836,64 840,69 845,58 849,58 853,52 863,52 871,41 875,47 880,47 885,69 894,58 897,47 903,58 907,58 911,52 925,52 929,58 938,58 943,52 952,47 965,47 974,38 978,41 983,52 987,47 996,47 1001,58 1005,47 1013,47 1019,52 1023,47 1026,26 1032,20 1041,31 1045,31 1050,26 1058,5 1062,4 1067,0',
  ma: '243,114 274,101 307,97 348,89 391,86 442,88 489,98 515,105 543,108 585,112 614,114 659,114 683,110 724,100 798,87 826,82 871,72 896,68 961,63 1022,56 1051,51 1067,46',
};

// volumen por minuto: altura + color (r, g, w)
const volumes = '112g 82r 55w 55g 76g 35w 7r 40r 33r 122r 73r 155r 66g 44r 27g 25w 39g 24w 7g 5r 11w 20w 22w 11r 64r 34r 43g 13g 23w 19r 22g 43r 28r 53r 100w 33r 31w 43r 54r 44g 89g 41w 14r 10w 81r 149r 96r 76g 52g 16w 20g 5g 35w 15r 11r 27r 17r 16g 8g 18g 2w 12g 30g 12r 10r 12r 4w 14r 64g 3r 4r 2w 15r 5r 3r 6w 11w 10w 2g 5g 2w 7w 1w 2r 1w 6r 2w 11g 7g 2w 4r 3w 2w 14g 7w 11w 5w 8r 7r 18g 8g 8r 6g 6w 6g 3r 9r 9r 10g 2w 19w 15r 4w 12w 2g 2r 2r 2w 3g 2r 3w 45g 1w 1w 2r 12r 5w 3g 1w 2w 15w 6w 5g 2w 2w 7w 2r 3w 9r 2r 9r 2r 6r 3w 58r 11w 2w 3w 21r 14w 3w 7w 102r 45w 33g 10w 6w 34w 12w 20w 7w 22w 10w 13g 8g 14w 13w 8r 17g 2w 7w 15w 9r 27r 5g 6w 31w 24r 23w 4g 23w 3w 11w 53w 51w 12r 2w 55w 9w 11g 86r 12w 51r 192w 10w 47r 189r 40g 44w 17g 57r 31r 64r 25g 11w 54r 41w 18w 8w 13g 20w 32w 35r 11w 18r 26w 20w 51w 51r 70r 39g 45g 20r 60w 18w 21g 63r 19w 35w 9g 28r 210r 77r 40g 23g 53w 42r 171r 60r 125w'.split(' ');
const step = 1067 / 240;
const volumePaths = [['r', '#d84848'], ['g', '#30b830'], ['w', '#ffffff']].map(([k, color]) => ({
  color,
  d: volumes.map((v, i) => (v.endsWith(k) ? `M${(i * step + 3).toFixed(1)} 230v-${parseInt(v)}` : '')).join(''),
}));

const bars = (from, to) => {
  let d = '';
  for (let i = from; i < to; i++) d += `M${(i * step + 1).toFixed(1)} 0h3v18h-3z`;
  return d;
};
const hatch = (x0, x1, y0, y1) => {
  let d = '';
  for (let x = x0; x < x1; x += 5) d += `M${x} ${y0}V${y1}`;
  return d;
};

// barras tenues: desviación del precio respecto a su media exponencial
const pts = lines.price.split(' ').map((p) => p.split(',').map(Number));
const priceAt = (x) => {
  const j = pts.findIndex((p) => p[0] >= x);
  if (j < 1) return pts[j < 0 ? pts.length - 1 : 0][1];
  const [a, b] = [pts[j - 1], pts[j]];
  return a[1] + ((b[1] - a[1]) * (x - a[0])) / (b[0] - a[0]);
};
const osc = { up: '', down: '' };
let mean = priceAt(3);
for (let i = 1; i < 240; i++) {
  const x = i * step + 2;
  const y = priceAt(x);
  mean += (y - mean) * 0.09;
  const h = Math.round((mean - y) * 0.8);
  if (h > 0) osc.up += `M${x.toFixed(1)} 181v${-h}`;
  else osc.down += `M${x.toFixed(1)} 181v${-h}`;
}

const indices = [
  ['上证', '3075.91', '-60.62', '-1.93%', '2665亿'], ['深证', '10791.1', '-274.48', '-2.48%', '2356亿'],
  ['沪深', '3312.42', '-54.53', '-1.62%', '2214亿'], ['中小', '6025.35', '-126.64', '-2.06%', '847.2亿'], ['创业', '1730.97', '-43.34', '-2.44%', '552.4亿'],
];
const apps = ['start', 'gauge', 'folder', 'player', 'ebrowser', 'orange', 'qbrowser', 'qplayer', 'bluep', 'hand', 'mic', 'icofile', 'kan', 'wps', 'note', 'tdxs', 'tdx', 'ecat', 'dragonfly', 'tdx', 'tdx', 'tdx', 'tdxs', 'tdxs', 'tdx', 'target', 'pinwheel', 'prof', 'note'];
const openApps = [4, 14, 15, 26, 28];
</script>

<style>
body { margin: 0; background: #000; }
</style>

<style scoped>
.desk { position: relative; display: flex; flex-direction: column; min-height: 100vh; overflow: hidden; background: #000; color: #fff; font: 12px/14px "Liberation Sans", "Noto Sans CJK SC", sans-serif; }
.defs { position: absolute; width: 0; height: 0; }
.hair { vector-effect: non-scaling-stroke; }
a { color: inherit; text-decoration: none; }
button { margin: 0; padding: 0; border: 0; background: none; color: inherit; font: inherit; cursor: pointer; }
p, ul { margin: 0; padding: 0; list-style: none; }
em, i { font-style: normal; }
b { font-weight: normal; }
.dim { color: #c4c4c4; }
.r { color: #f04444; }
.g { color: #34d034; }
.w { color: #fff; }
.y { color: #d8d820; }
.o { color: #e89830; }
.b { color: #3c98e8; }
.pink { color: #c83078; }

.topbar { display: flex; align-items: center; flex: none; height: 22px; border-bottom: 1px solid #444; background: linear-gradient(#383838, #1c1c1c); }
.topnav { display: flex; align-items: center; width: 345px; height: 22px; background: #080808; clip-path: polygon(0 0, 97% 0, 100% 100%, 0 100%); }
.applogo { width: 16px; height: 18px; margin: 0 28px 0 3px; }
.topnav button { width: 32px; height: 20px; margin-right: 7px; border: 1px solid #2c2c2c; border-radius: 4px; background: #101010; }
.topnav button svg { width: 16px; height: 14px; vertical-align: middle; }
.menu { display: flex; gap: 18px; margin-left: 154px; color: #d0d0d0; white-space: nowrap; }
.menu .hot { color: #f46830; }
.quick { display: flex; gap: 1px; margin-left: 28px; white-space: nowrap; }
.quick button { height: 18px; padding: 0 3px; border: 1px solid #6c6020; color: #101010; }
.gold { background: linear-gradient(#f8d870, #e09c20); }
.rose { background: linear-gradient(#ffb0a8, #f06c68); }
.lime { background: linear-gradient(#f0f068, #c8c818); }
.sky { background: linear-gradient(#a8dcff, #58a8e8); }
.meter { display: flex; gap: 1px; width: 52px; height: 9px; margin: 0 0 4px 69px; padding: 1px 3px; border: 3px solid #e4e8ec; border-radius: 8px; background: #1864a8; }
.meter i { flex: 1; background: #3c94d8; }
.meter i.on { background: #70e050; }
.bubble { align-self: flex-start; width: 42px; height: 17px; margin-left: 54px; border: 2px solid #b8e8c0; border-top: 0; border-radius: 0 0 22px 22px; background: #34b058; line-height: 14px; text-align: center; }

.workspace { position: relative; flex: 1; display: grid; grid-template-columns: 24px 17px minmax(0, 1174fr) minmax(0, 481fr) 224px; grid-template-rows: minmax(0, 1fr) 18px; min-height: 900px; }
.tools { grid-row: 1 / 3; display: flex; flex-direction: column; align-items: center; padding-top: 2px; background: #f0f0f0; color: #20409c; }
.tools button { width: 24px; height: 22px; font-size: 12px; white-space: nowrap; }
.tools svg { width: 16px; height: 16px; vertical-align: middle; }
.tools .up svg { transform: rotate(90deg); }
.tools .down svg { transform: rotate(-90deg); }
.tools .boxed { width: 18px; height: 16px; margin: 3px 0; border: 1px solid #3b6cc4; background: #fff; font-size: 9px; line-height: 12px; }
.tools .self { color: #e86c20; font-size: 12px; }
.tools hr { width: 20px; margin: 4px 0; border: 0; border-top: 1px solid #999; }
.tools .rest { flex: 1; width: 100%; margin-top: 32px; border-top: 1px solid #999; }

.sidetabs { display: flex; flex-direction: column; overflow: hidden; border-right: 1px solid #8c1010; color: #c8c8c8; }
.sidetabs a { flex: none; padding: 5px 2px 6px 1px; border-bottom: 1px solid #8c1010; line-height: 12px; text-align: center; }
.sidetabs a.tight { padding: 0 2px 0 1px; line-break: anywhere; }
.sidetabs a:last-child { padding: 3px 2px 0 1px; border-bottom: 0; }
.sidetabs a.active, .tabs a.active, .even a.active { color: #20e0e0; }
.scroller { display: flex; flex-direction: column; flex: none; height: 25px; border-bottom: 1px solid #b01010; color: #b01414; }
.scroller button { height: 12px; line-height: 12px; }

.main { display: flex; flex-direction: column; min-width: 0; }
.chart-head { display: flex; align-items: center; flex: none; gap: 5px; height: 20px; padding: 0 3px 0 57px; white-space: nowrap; }
.main .chart-head { margin-right: 50px; border-right: 1px solid #8c1010; }
.chart-head .gap { margin-left: 7px; }
.stat { margin-left: auto; }
.split { width: 4px; height: 9px; margin-left: 6px; border: 1px solid #a01010; border-right-width: 4px; border-right-style: double; }
.upper { display: flex; flex: 693 1 0; min-height: 0; }
.plot { position: relative; flex: 1; min-width: 0; border-left: 1px solid #a01414; border-right: 1px solid #a01414; border-bottom: 1px solid #a01414; }
.upper .plot { border-top: 1px solid #c01010; }
.fill { position: absolute; inset: 0; width: 100%; height: 100%; }
.volume-pane { position: absolute; left: 0; right: 0; bottom: 0; height: 33%; display: flex; flex-direction: column; }
.row { flex: 1; border-top: 1px solid #8c1414; }
.volume-pane .row:first-child { border-top-color: transparent; }
.label { position: absolute; line-height: 14px; margin-top: -7px; white-space: nowrap; }
.side-chart .plot { overflow: hidden; }
.marker { position: absolute; width: 20px; height: 30px; margin: -15px 0 0 -10px; overflow: visible; }
.buy { font: bold 14px "Liberation Mono", monospace; fill: #ffe890; stroke: #c01808; stroke-width: 3px; paint-order: stroke; }

.axis { position: relative; display: flex; flex-direction: column; flex: none; }
.axis.left { width: 56px; text-align: right; }
.axis.right { width: 50px; }
.prices { flex: 2; display: flex; flex-direction: column; }
.vols { flex: 1; display: flex; flex-direction: column; color: #c4c428; }
.axis span { flex: 1; min-height: 0; }
.axis em { display: block; margin-top: -7px; padding: 0 4px; line-height: 14px; }
.vsat { position: absolute; right: 3px; bottom: 4px; width: 51px; height: 21px; background: #c46404; font-family: "Liberation Mono", "Noto Sans CJK SC", monospace; font-size: 11px; white-space: nowrap; }

.indicator-head { display: flex; align-items: center; flex: none; gap: 6px; height: 20px; margin: 0 50px 0 56px; padding: 0 4px 0 1px; border-left: 1px solid #a01414; border-right: 1px solid #a01414; white-space: nowrap; }
.indicator-head .y { color: #f8f850; }
.indicator-head button { color: #aaa; }
.lower { display: flex; flex: 210 1 0; min-height: 0; }
.scale { padding-top: 25px; color: #c8c8c8; }
.future { position: absolute; left: 3px; top: 4px; color: #777; }
.times { display: flex; flex: none; height: 18px; align-items: center; color: #d84040; }
.ticks { flex: 1; display: flex; margin-left: 56px; line-height: 18px; }
.ticks span { flex: 1; text-indent: -30px; }
.times button { width: 50px; height: 18px; border-left: 1px solid #a01414; color: #c8c8c8; }

.tabs { display: flex; flex: none; height: 17px; border-top: 1px solid #a01414; box-sizing: border-box; color: #c8c8c8; white-space: nowrap; }
.tabs a { padding: 0 4px 0 3px; border-right: 1px solid #a01414; line-height: 16px; }
.tabs a.y { color: #d4d424; }
.ext { grid-column: 2 / 4; grid-row: 2; height: 18px; border: 1px solid #a01414; border-right: 0; }
.zoomers { display: flex; margin-left: auto; }
.zoomers button { width: 17px; border-left: 1px solid #a01414; }
.fold { width: 50px; margin-left: auto; border-left: 1px solid #a01414; }

.middle { display: flex; flex-direction: column; min-width: 0; border-left: 1px solid #a01414; }
.cost { position: relative; flex: 441 1 0; min-height: 0; display: flex; flex-direction: column; }
.cost-head { display: flex; align-items: center; gap: 93px; height: 20px; padding-left: 2px; }
.cost-head svg { width: 66px; height: 17px; }
.legend { width: 126px; margin: auto 4px -24px auto; color: #181818; z-index: 1; }
.legend li { height: 17px; padding-left: 6px; line-height: 17px; }
.spread { position: relative; height: 102px; padding-top: 22px; color: #c4b8b8; }
.spread p { position: relative; height: 17px; padding-left: 4px; line-height: 17px; white-space: nowrap; }
.ratio span { margin-left: 197px; color: #ccc; }
.side-chart { flex: 539 1 0; display: flex; flex-direction: column; min-height: 0; }
.side-chart .axis.left { width: 55px; }
.side-chart .chart-head { margin-right: 51px; border-right: 1px solid #a01414; }
.side-chart .times button { width: 51px; }
.even { display: flex; border: solid #a01414; border-width: 1px 0 1px 1px; color: #c8c8c8; }
.even a { flex: 1; border-right: 1px solid #a01414; line-height: 16px; text-align: center; }
.mid-tabs { grid-column: 4; grid-row: 2; }

.quotes { grid-column: 5; grid-row: 1; display: flex; flex-direction: column; border-left: 1px solid #a01414; }
.quote-top { flex: none; height: 29px; }
.quotes table { flex: none; width: 100%; border-collapse: collapse; table-layout: fixed; font-size: 14px; }
.quotes tbody { border-bottom: 2px solid #8c1010; }
.quotes tr { height: 19px; }
.quotes th { padding: 0 0 0 1px; color: #c4c4c4; font-size: 16px; font-weight: normal; line-height: 19px; text-align: left; white-space: nowrap; }
.quotes td { padding: 0; font-weight: bold; line-height: 19px; text-align: right; }
.book td:last-child { padding-right: 50px; }
.book th { width: 50px; }
.book td.r { width: 57px; }
.facts th:first-child { width: 56px; }
.facts td:nth-child(2) { width: 52px; }
.facts th:nth-child(3) { width: 55px; padding-left: 4px; }
.facts td:last-child { padding-right: 4px; }
.qty { color: #c8c828; }
.mini-head { display: flex; flex: none; gap: 10px; height: 20px; line-height: 20px; white-space: nowrap; }
.mini { flex: 1; display: flex; min-height: 0; margin-bottom: 9px; border-bottom: 1px solid #a01414; }
.mini-plot { position: relative; flex: 1; display: flex; flex-direction: column; border-right: 1px solid #a01414; }
.mini-plot .row { border-top: 1px dotted #641414; }
.mini-plot .row.solid { border-top: 1px solid #a01414; }
.line { position: absolute; left: 0; top: 0; width: 100%; height: 66.7%; }
.bars { position: absolute; left: 0; bottom: 0; width: 100%; height: 33.3%; }

.notes-lines { position: absolute; inset: 0; width: 100%; height: 100%; pointer-events: none; }
.note { position: absolute; color: #f48c1c; font: 20px/19px "Liberation Serif", "Noto Sans CJK SC", serif; text-align: center; white-space: nowrap; transform: translateX(-50%); }
.first { left: 28.5%; top: 50%; }
.second { left: 35%; top: 73.7%; }
.credit { position: absolute; left: 40%; top: 50.2%; color: #e40000; font: bold 25px/32px "Open Sans", "Noto Sans CJK SC", sans-serif; white-space: nowrap; }
.brand { position: absolute; top: 2px; right: 2px; width: 214px; height: 55px; padding-left: 6px; background: #ececec; overflow: hidden; }
.brand div { display: flex; align-items: center; height: 30px; padding-top: 2px; }
.brand b { margin-right: 7px; color: #1414e8; font: bold 20px/24px "Noto Sans CJK SC", sans-serif; }
.brand span { width: 17px; border: solid #b8b8b8; border-width: 1px 0 1px 1px; color: #303030; font-size: 15px; line-height: 18px; text-align: center; }
.brand a { display: block; margin: -4px 0 0 -2px; color: #f03c0c; font: bold 22px/24px "Open Sans", sans-serif; white-space: nowrap; }

.status { display: flex; align-items: center; flex: none; height: 20px; background: linear-gradient(#303030, #080808); white-space: nowrap; }
.status .box { width: 14px; height: 14px; margin: 0 2px; }
.index { display: grid; grid-template-columns: 25px 50px 40px 54px 46px; }
.index b { color: #18c83c; font-weight: bold; }
.index .chg { text-align: right; }
.index .pct { padding-left: 7px; }
.gauges { width: 102px; height: 16px; margin-left: 2px; }
.server { margin-left: 7px; padding-left: 2px; border-left: 1px solid #555; }
.flags { width: 98px; height: 16px; margin-left: auto; margin-right: 4px; }

.taskbar { display: flex; align-items: center; flex: none; height: 39px; background: linear-gradient(90deg, #12283c 0, #14304a 410px, #a8c0e4 435px, #c0cce4 640px, #a8a0b0 800px, #bcb4c4 1000px, #90a0c4 1250px, #c0c8dc 1480px, #24405c 1535px, #10283c 100%); border-top: 1px solid #6c7884; box-sizing: border-box; }
.taskbar button { flex: none; width: 49px; height: 38px; margin-right: 4px; border: 1px solid transparent; border-radius: 3px; box-sizing: border-box; }
.taskbar svg { width: 34px; height: 34px; vertical-align: middle; }
.taskbar .open { border-color: #dce4ec; background: linear-gradient(135deg, rgba(255, 255, 255, 0.55), rgba(255, 255, 255, 0.15)); }
.taskbar .startb { margin-left: 3px; }
.taskbar .tray { display: flex; align-items: center; margin-left: 6px; font-size: 12px; }
.taskbar .tray svg { width: 200px; height: 36px; margin-left: 4px; }
.taskbar .tray .net { width: 70px; margin-left: -14px; }
.clock { margin-left: auto; padding-right: 12px; font-family: "Noto Sans", sans-serif; font-size: 12px; line-height: 18px; text-align: center; }
.taskbar .peek { width: 14px; height: 38px; margin: 0; border-color: #8898a8; background: #30465a; }
</style>
